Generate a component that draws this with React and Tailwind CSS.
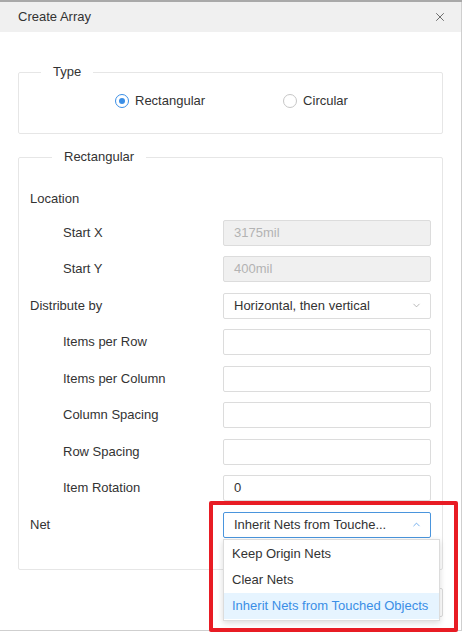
import { X, ChevronDown, ChevronUp } from 'lucide-react';

const rows = [
  { label: 'Start X', indent: true, kind: 'disabled', value: '3175mil' },
  { label: 'Start Y', indent: true, kind: 'disabled', value: '400mil' },
  { label: 'Distribute by', indent: false, kind: 'select', value: 'Horizontal, then vertical' },
  { label: 'Items per Row', indent: true, kind: 'input', value: '' },
  { label: 'Items per Column', indent: true, kind: 'input', value: '' },
  { label: 'Column Spacing', indent: true, kind: 'input', value: '' },
  { label: 'Row Spacing', indent: true, kind: 'input', value: '' },
  { label: 'Item Rotation', indent: true, kind: 'input', value: '0' },
];

const netOptions = ['Keep Origin Nets', 'Clear Nets', 'Inherit Nets from Touched Objects'];

function Field({ kind, value }) {
  if (kind === 'disabled') {
    return (
      <div className="w-[208px] h-[26px] border border-[#dcdcdc] rounded-[2px] bg-[#f0f0f0] flex items-center px-[10px] text-[#b3b3b3]">
        {value}
      </div>
    );
  }
  if (kind === 'select') {
    return (
      <div className="w-[208px] h-[26px] border border-[#dcdcdc] rounded-[2px] bg-white flex items-center justify-between pl-[10px] pr-[8px] text-[#333]">
        <span>{value}</span>
        <ChevronDown className="w-[11px] h-[11px] text-[#999]" strokeWidth={1.5} />
      </div>
    );
  }
  return (
    <div className="w-[208px] h-[26px] border border-[#dcdcdc] rounded-[2px] bg-white flex items-center px-[10px] text-[#333]">
      {value}
    </div>
  );
}

function Radio({ checked, label }) {
  return (
    <div className="flex items-center gap-[6px]">
      <span
        className={`w-[14px] h-[14px] rounded-full border flex items-center justify-center ${
          checked ? 'border-[#3a8ee6]' : 'border-[#c6c6c6]'
        }`}
      >
        {checked && <span className="w-[6px] h-[6px] rounded-full bg-[#3a8ee6]" />}
      </span>
      <span>{label}</span>
    </div>
  );
}

export default function App() {
  return (
    <div
      className="relative w-[462px] h-[637px] bg-white overflow-hidden text-[13px] leading-[20px] text-[#333]"
      style={{ fontFamily: '"Liberation Sans", Arial, sans-serif' }}
    >
      <div className="h-[2px] bg-[#a9a9a9]" />
      <div className="w-[462px] h-[629px] border-r border-b border-[#cfcfcf] flex flex-col">
        {/* Title bar */}
        <div className="h-[30px] bg-[#f0f0f0] flex items-center justify-between pl-[18px] pr-[14px]">
          <span>Create Array</span>
          <X className="w-[14px] h-[14px] text-[#444]" strokeWidth={1.3} />
        </div>

        {/* Type */}
        <fieldset className="mx-[18px] mt-[30px] h-[72px] border border-[#e6e6e6] rounded-[2px]">
          <legend className="ml-[22px] px-[12px]">Type</legend>
          <div className="flex items-center pt-[9px] pl-[96px] gap-[78px]">
            <Radio checked label="Rectangular" />
            <Radio label="Circular" />
          </div>
        </fieldset>

        {/* Rectangular */}
        <fieldset className="mx-[18px] mt-[13px] border border-[#e6e6e6] rounded-[2px] px-[11px] pt-[19px] pb-[31px]">
          <legend className="ml-[22px] px-[12px]">Rectangular</legend>
          <div className="flex flex-col gap-[10.5px]">
            <div className="h-[26px] -mb-[3px] flex items-center">Location</div>
            {rows.map((r) => (
              <div key={r.label} className="h-[26px] flex items-center justify-between">
                <span className={r.indent ? 'pl-[33px]' : ''}>{r.label}</span>
                <Field kind={r.kind} value={r.value} />
              </div>
            ))}
            <div className="h-[26px] flex items-center justify-between">
              <span>Net</span>
              <div className="w-[208px] h-[26px] border border-[#4a95dd] rounded-[2px] bg-white flex items-center justify-between pl-[10px] pr-[8px]">
                <span>Inherit Nets from Touche...</span>
                <ChevronUp className="w-[11px] h-[11px] text-[#3a8ee6]" strokeWidth={1.5} />
              </div>
            </div>
          </div>
        </fieldset>

        {/* Footer buttons, mostly covered by the open menu */}
        <div className="flex justify-end gap-[10px] pr-[18px] pt-[18px]">
          <div className="w-[64px] h-[29px] border border-[#dcdcdc] rounded-[2px]" />
          <div className="w-[64px] h-[29px] border border-[#dcdcdc] rounded-[2px]" />
        </div>
      </div>

      {/* Dropdown menu */}
      <div className="absolute left-[223px] top-[539px] w-[217px] bg-white border border-[#dcdcdc] shadow-[0_2px_6px_rgba(0,0,0,0.15)] py-[1px]">
        {netOptions.map((o, i) => (
          <div
            key={o}
            className={`h-[26px] flex items-center pl-[8px] whitespace-nowrap ${
              i === 2 ? 'bg-[#e6f4ff] text-[#3a8ee6]' : 'text-[#333]'
            }`}
          >
            {o}
          </div>
        ))}
      </div>

      {/* Red annotation box */}
      <div className="absolute left-[209px] top-[501px] w-[249px] h-[131px] border-[4px] border-[#e81c24] rounded-[2px]" />
    </div>
  );
}
